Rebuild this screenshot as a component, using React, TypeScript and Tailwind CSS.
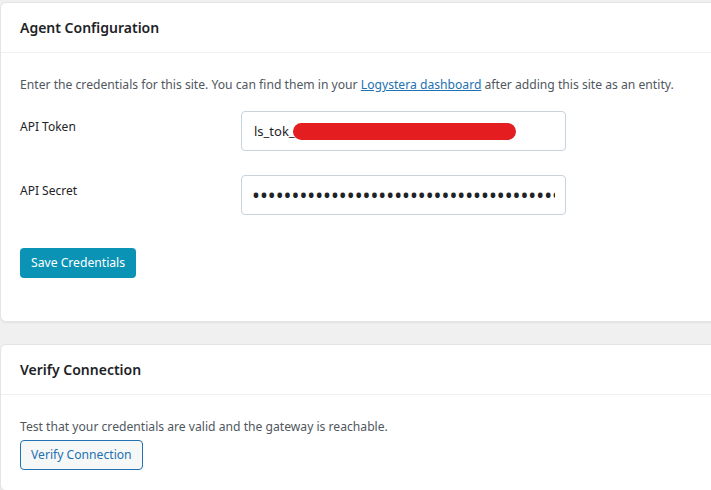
import type { JSX } from 'react';

function Card({
  title,
  children,
  className,
}: {
  title: string;
  children: React.ReactNode;
  className?: string;
}): JSX.Element {
  return (
    <section
      className={`mr-[-24px] rounded-md border border-[#e2e4e7] bg-white shadow-[0_1px_2px_rgba(0,0,0,0.06)] ${className ?? ''}`}
    >
      <div className="flex h-[50px] items-center border-b border-[#eef0f3] px-[19px]">
        <h2 className="text-[14px] font-semibold text-[#1d2327]">{title}</h2>
      </div>
      {children}
    </section>
  );
}

export default function App(): JSX.Element {
  return (
    <div
      className="h-[490px] w-[711px] overflow-hidden bg-[#f0f0f1] pt-[2px]"
      style={{ fontFamily: '"Noto Sans", "Open Sans", sans-serif' }}
    >
      <Card title="Agent Configuration">
        <div className="px-[19px] pt-[23px] pb-[43px]">
          <p className="whitespace-nowrap text-[12.15px] leading-[18px] text-[#50575e]">
            Enter the credentials for this site. You can find them in your{' '}
            <a href="#" className="text-[#2271b1] underline">
              Logystera dashboard
            </a>{' '}
            after adding this site as an entity.
          </p>

          <div className="mt-[17px] flex flex-col gap-[24px]">
            <div className="flex">
              <label className="w-[221px] pt-[7px] text-[12px] text-[#1d2327]">
                API Token
              </label>
              <div className="relative">
                <input
                  readOnly
                  value="ls_tok_e"
                  className="h-[40px] w-[325px] rounded border border-[#c9d1db] bg-white px-3 text-[13px] text-[#1d2327] outline-none"
                />
                <span className="absolute left-[52px] top-[12px] h-[17px] w-[223px] rounded-full bg-[#e41e20]" />
              </div>
            </div>
            <div className="flex">
              <label className="w-[221px] pt-[7px] text-[12px] text-[#1d2327]">
                API Secret
              </label>
              <input
                type="password"
                readOnly
                value="abcdefghijklmnopqrstuvwxyzabcdefghijklmnopqrstuvwxyz"
                className="h-[40px] w-[325px] rounded border border-[#c9d1db] bg-white px-[10px] text-[21px] text-[#1d2327] outline-none"
              />
            </div>
          </div>

          <button
            type="button"
            className="mt-[33px] h-[30px] rounded bg-[#0b93b6] px-[11px] text-[12.15px] text-white"
          >
            Save Credentials
          </button>
        </div>
      </Card>

      <Card title="Verify Connection" className="mt-[22px]">
        <div className="px-[19px] pt-[23px] pb-5">
          <p className="text-[12.15px] leading-[18px] text-[#50575e]">
            Test that your credentials are valid and the gateway is reachable.
          </p>
          <button
            type="button"
            className="mt-[4px] h-[30px] rounded border border-[#2271b1] bg-[#f6f7f7] px-[10px] text-[12.15px] text-[#2271b1]"
          >
            Verify Connection
          </button>
        </div>
      </Card>
    </div>
  );
}
